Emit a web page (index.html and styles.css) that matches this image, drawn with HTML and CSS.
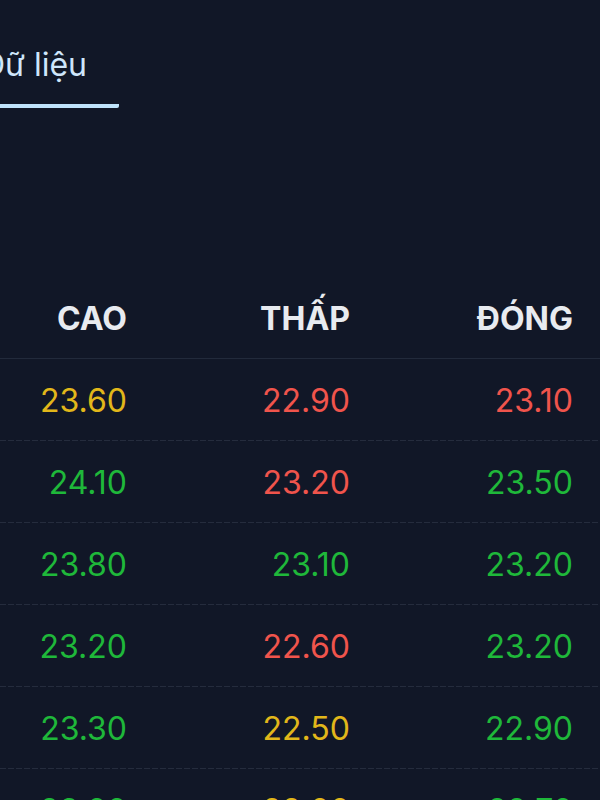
FILE: index.html
```html
<!DOCTYPE html>
<html lang="vi">
<head>
<meta charset="utf-8">
<link rel="stylesheet" href="styles.css">
</head>
<body>
  <nav class="tabs">
    <div class="tab active">Dữ liệu</div>
  </nav>
  <div class="table">
    <div class="row head">
      <div class="cell">CAO</div>
      <div class="cell">THẤP</div>
      <div class="cell">ĐÓNG</div>
    </div>
    <div class="row">
      <div class="cell yellow">23.60</div>
      <div class="cell red">22.90</div>
      <div class="cell red">23.10</div>
    </div>
    <div class="row">
      <div class="cell green">24.10</div>
      <div class="cell red">23.20</div>
      <div class="cell green">23.50</div>
    </div>
    <div class="row">
      <div class="cell green">23.80</div>
      <div class="cell green">23.10</div>
      <div class="cell green">23.20</div>
    </div>
    <div class="row">
      <div class="cell green">23.20</div>
      <div class="cell red">22.60</div>
      <div class="cell green">23.20</div>
    </div>
    <div class="row">
      <div class="cell green">23.30</div>
      <div class="cell yellow">22.50</div>
      <div class="cell green">22.90</div>
    </div>
    <div class="row">
      <div class="cell green">23.00</div>
      <div class="cell yellow">22.00</div>
      <div class="cell green">22.70</div>
    </div>
  </div>
</body>
</html>
```
FILE: styles.css
```css
html, body {
  margin: 0;
  padding: 0;
  background: #111727;
  overflow: hidden;
  height: 800px;
}
body {
  font-family: Inter, "Noto Sans", sans-serif;
  color: #e5e7eb;
}
.tabs {
  display: flex;
  height: 108px;
}
.tab {
  margin-left: -50px;
  padding: 46px 32px 20px 32px;
  font-size: 32px;
  line-height: 38px;
  color: #cfe6fb;
  border-bottom: 4px solid #bfe3fb;
  border-radius: 0 0 2px 0;
  white-space: nowrap;
}
.table {
  margin-top: 169px;
}
.row {
  display: grid;
  grid-template-columns: 127px 223px 223px;
  padding-right: 27px;
  height: 82px;
  box-sizing: border-box;
  align-items: center;
  background-image: repeating-linear-gradient(to right, #252c3d 0 6px, transparent 6px 8px);
  background-size: 100% 1px;
  background-position: left bottom;
  background-repeat: no-repeat;
}
.row.head {
  background: none;
  border-bottom: 1px solid #222a3b;
}
.cell {
  text-align: right;
  font-size: 32px;
  line-height: 38px;
  padding-top: 2px;
  white-space: nowrap;
}
.head .cell {
  font-weight: 700;
  color: #e8ebf0;
}
.yellow { color: #e2b71a; }
.red { color: #f0544c; }
.green { color: #1fb83a; }
```
